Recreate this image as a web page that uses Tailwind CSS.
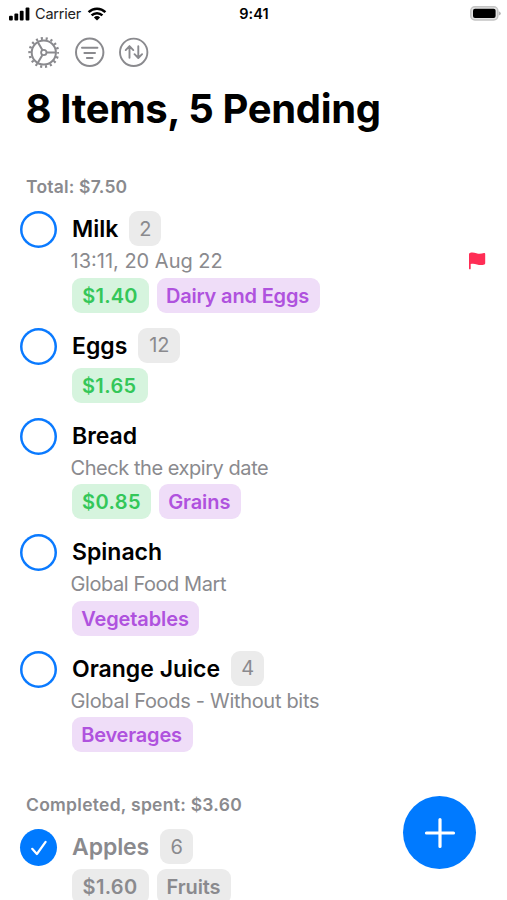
<!DOCTYPE html>
<html lang="en">
<head>
<meta charset="utf-8">
<meta name="viewport" content="width=device-width, initial-scale=1">
<title>Shopping List</title>
<script src="https://cdn.jsdelivr.net/npm/@tailwindcss/browser@4"></script>
</head>
<body class="bg-white">
<div class="relative flex h-[900px] w-[507px] flex-col overflow-hidden bg-white font-['Inter','Liberation_Sans',sans-serif] text-black">

  <!-- Status bar -->
  <header class="grid h-7 shrink-0 grid-cols-3 items-center pl-2 pr-[6px]">
    <div class="flex items-center">
      <svg class="h-[14px] w-[22px]" viewBox="0 0 22 14"><rect x="1" y="8.7" width="3.8" height="4.8" rx="1"/><rect x="6.4" y="6.5" width="3.8" height="7" rx="1"/><rect x="11.8" y="3.8" width="3.8" height="9.7" rx="1"/><rect x="17.6" y="0.5" width="3.8" height="13" rx="1"/></svg>
      <span class="ml-[5px] text-[14.5px] leading-7 tracking-[-0.2px] text-[#222]">Carrier</span>
      <svg class="ml-[6px] h-[14px] w-[20px]" viewBox="0 0 20 14" fill="none" stroke="#000" stroke-width="2.5"><path d="M1.6 5.1a12 12 0 0 1 16.8 0"/><path d="M4.6 8.4a7.7 7.7 0 0 1 10.8 0"/><path d="M10 13.6 6.9 10.5a4.6 4.6 0 0 1 6.2 0Z" fill="#000" stroke="none"/></svg>
    </div>
    <div class="pr-px text-center text-[14.5px] font-semibold leading-7 tracking-[0.1px]">9:41</div>
    <svg class="h-[16px] w-[31px] justify-self-end" viewBox="0 0 31 16"><rect x="0.8" y="0.8" width="27" height="13.2" rx="4" fill="#e4e4e4" stroke="#c4c4c4" stroke-width="1.5"/><rect x="3" y="2.8" width="22.6" height="9.2" rx="2"/><path d="M28.8 5.2q2 .8 2 2.2t-2 2.2z" fill="#b5b5b5"/></svg>
  </header>

  <!-- Toolbar -->
  <nav class="flex h-12 shrink-0 items-center gap-3 pl-[27px] text-[#8a8a8e]">
    <svg class="mr-[3px] size-8" viewBox="0 0 32 32" fill="none" stroke="currentColor" stroke-width="2"><circle cx="16.8" cy="16.500" r="12.1"/><circle cx="16.8" cy="16.500" r="14.2" stroke-width="2.6" stroke-dasharray="2.1 2.857" stroke-dashoffset="1"/><circle cx="16.8" cy="16.500" r="2.7" stroke-width="1.8"/><path d="M19.500 16.500h9.4M15.400 14.1 10.700 6M15.400 18.900l-4.7 8.1"/></svg>
    <svg class="size-8" viewBox="0 0 32 32" fill="none" stroke="currentColor" stroke-width="2" stroke-linecap="round"><circle cx="15.7" cy="16.300" r="13.7"/><path d="M8 11.800h15.4M10.400 16.900h10.6M12.900 21.900h5.6"/></svg>
    <svg class="size-8" viewBox="0 0 32 32" fill="none" stroke="currentColor" stroke-width="1.9" stroke-linecap="round" stroke-linejoin="round"><circle cx="15.7" cy="16.300" r="13.7"/><path d="M11.500 21.8V10.3M7.700 14.1l3.8-3.9 3.8 3.9M20.300 10.3v11.6M16.500 18.2l3.8 3.8 3.8-3.8"/></svg>
  </nav>

  <h1 class="ml-[25.5px] mt-[8px] h-12 shrink-0 whitespace-nowrap text-[40px] font-bold leading-[50px] tracking-[-0.35px]">8 Items, 5 Pending</h1>

  <main class="flex flex-col">
    <h2 class="ml-[26px] mt-[43px] h-6 whitespace-nowrap text-[17.5px] font-semibold leading-6 tracking-[0.2px] text-[#8a8a8e]">Total: $7.50</h2>

    <ul class="mt-[12px] flex flex-col gap-[15px] pl-5">
      <li class="flex gap-[15px]">
        <span class="size-[37px] shrink-0 rounded-full shadow-[inset_0_0_0_2.5px_#0a7aff]"></span>
        <div class="flex grow flex-col">
          <div class="flex h-[35px] items-center gap-[11px] text-[23px] font-semibold"><span class="pt-px">Milk</span><span class="grid h-[35px] w-8 place-items-center rounded-[9px] bg-[#ebebeb] text-xl font-normal text-[#8a8a8e]">2</span></div>
          <div class="-ml-[1.5px] h-[31.5px] text-[20px] leading-[30px] text-[#8a8a8e]">13:11, 20 Aug 22</div>
          <div class="flex h-[35px] gap-2 text-[20px] font-semibold leading-[36px]"><span class="w-[77px] rounded-[9px] bg-[#d6f4de] pr-px text-center tracking-[0.2px] text-[#34c759]">$1.40</span><span class="w-[163px] rounded-[9px] bg-[#efddf8] pr-[2px] text-center tracking-[-0.17px] text-[#af52de]">Dairy and Eggs</span></div>
        </div>
        <svg class="mr-[21px] mt-[41px] h-[18px] w-[17px]" viewBox="0 0 17 18" fill="#ff2d55"><path d="M0 2.1Q0 1.3.8 1C3 .1 5 .5 7.400 1.300S12.500 2 15 1q1.200-.3 1.200 1v9.300q0 .8-.8 1.100c-2.700 1.100-5 .8-7.400 0s-4.300-1-6.300-.4v4.400q0 .9-.85.9T0 16.400Z"/></svg>
      </li>
      <li class="flex gap-[15px]">
        <span class="size-[37px] shrink-0 rounded-full shadow-[inset_0_0_0_2.5px_#0a7aff]"></span>
        <div class="flex flex-col gap-[5px]">
          <div class="flex h-[35px] items-center gap-[11px] text-[23px] font-semibold"><span class="pt-[2px]">Eggs</span><span class="grid h-[35px] w-[42px] place-items-center rounded-[9px] bg-[#ebebeb] text-xl font-normal text-[#8a8a8e]">12</span></div>
          <div class="flex h-[35px] gap-2 text-[20px] font-semibold leading-[36px]"><span class="w-[75.5px] rounded-[9px] bg-[#d6f4de] pr-px text-center tracking-[0.4px] text-[#34c759]">$1.65</span></div>
        </div>
      </li>
      <li class="flex gap-[15px]">
        <span class="size-[37px] shrink-0 rounded-full shadow-[inset_0_0_0_2.5px_#0a7aff]"></span>
        <div class="flex flex-col">
          <div class="flex h-[35px] items-center pt-[2px] text-[23px] font-semibold">Bread</div>
          <div class="-ml-[1.5px] h-[31.5px] text-[20px] leading-[30px] tracking-[-0.45px] text-[#8a8a8e]">Check the expiry date</div>
          <div class="flex h-[35px] gap-2 text-[20px] font-semibold leading-[36px]"><span class="w-[79px] rounded-[9px] bg-[#d6f4de] text-center tracking-[0.4px] text-[#34c759]">$0.85</span><span class="w-[81.5px] rounded-[9px] bg-[#efddf8] pr-px text-center tracking-[-0.1px] text-[#af52de]">Grains</span></div>
        </div>
      </li>
      <li class="flex gap-[15px]">
        <span class="size-[37px] shrink-0 rounded-full shadow-[inset_0_0_0_2.5px_#0a7aff]"></span>
        <div class="flex flex-col">
          <div class="flex h-[35px] items-center pt-[2px] text-[23px] font-semibold">Spinach</div>
          <div class="-ml-[1.5px] h-[31.5px] text-[20px] leading-[31px] tracking-[-0.43px] text-[#8a8a8e]">Global Food Mart</div>
          <div class="flex h-[35px] gap-2 text-[20px] font-semibold leading-[36px]"><span class="w-[127px] rounded-[9px] bg-[#efddf8] pr-px text-center tracking-[-0.1px] text-[#af52de]">Vegetables</span></div>
        </div>
      </li>
      <li class="flex gap-[15px]">
        <span class="size-[37px] shrink-0 rounded-full shadow-[inset_0_0_0_2.5px_#0a7aff]"></span>
        <div class="flex flex-col">
          <div class="flex h-[35px] items-center gap-[11px] text-[23px] font-semibold"><span class="pt-[2px]">Orange Juice</span><span class="grid h-[35px] w-[33px] place-items-center rounded-[9px] bg-[#ebebeb] text-xl font-normal text-[#8a8a8e]">4</span></div>
          <div class="-ml-[1.5px] h-[31.5px] text-[20px] leading-[30px] tracking-[-0.31px] text-[#8a8a8e]">Global Foods - Without bits</div>
          <div class="flex h-[35px] gap-2 text-[20px] font-semibold leading-[36px]"><span class="w-[121px] rounded-[9px] bg-[#efddf8] pr-[2px] text-center tracking-[-0.2px] text-[#af52de]">Beverages</span></div>
        </div>
      </li>
    </ul>

    <h2 class="ml-[26px] mt-[40.5px] h-6 whitespace-nowrap text-[17.5px] font-semibold leading-6 tracking-[0.27px] text-[#8a8a8e]">Completed, spent: $3.60</h2>

    <ul class="mt-[12.5px] pl-5">
      <li class="flex gap-[15px]">
        <span class="grid size-[37px] shrink-0 place-items-center rounded-full bg-[#007aff]"><svg class="size-[18px]" viewBox="0 0 18 18" fill="none" stroke="#fff" stroke-width="2.2" stroke-linecap="round" stroke-linejoin="round"><path d="m2.200 9.800 4.700 5.200L15.600 2.800"/></svg></span>
        <div class="flex flex-col gap-[5px]">
          <div class="flex h-[35px] items-center gap-[11px] text-[23px] font-semibold text-[#8a8a8e]"><span class="pt-px tracking-[-0.1px]">Apples</span><span class="grid h-[35px] w-[33px] place-items-center rounded-[9px] bg-[#ebebeb] text-xl font-normal">6</span></div>
          <div class="flex h-[35px] gap-2 text-[20px] font-semibold leading-[36px] text-[#8a8a8e]"><span class="w-[77px] rounded-[9px] bg-[#ebebeb] pr-px text-center tracking-[0.3px]">$1.60</span><span class="w-[74px] rounded-[9px] bg-[#ebebeb] pr-px text-center tracking-[-0.1px]">Fruits</span></div>
        </div>
      </li>
    </ul>
  </main>

  <!-- Floating add button -->
  <button class="absolute left-[403px] top-[796px] grid size-[73px] place-items-center rounded-full bg-[#007aff]" aria-label="Add item">
    <svg class="size-8" viewBox="0 0 32 32" stroke="#fff" stroke-width="3.200" stroke-linecap="round"><path d="M2.500 16h27M16 2.500v27"/></svg>
  </button>
</div>
</body>
</html>
